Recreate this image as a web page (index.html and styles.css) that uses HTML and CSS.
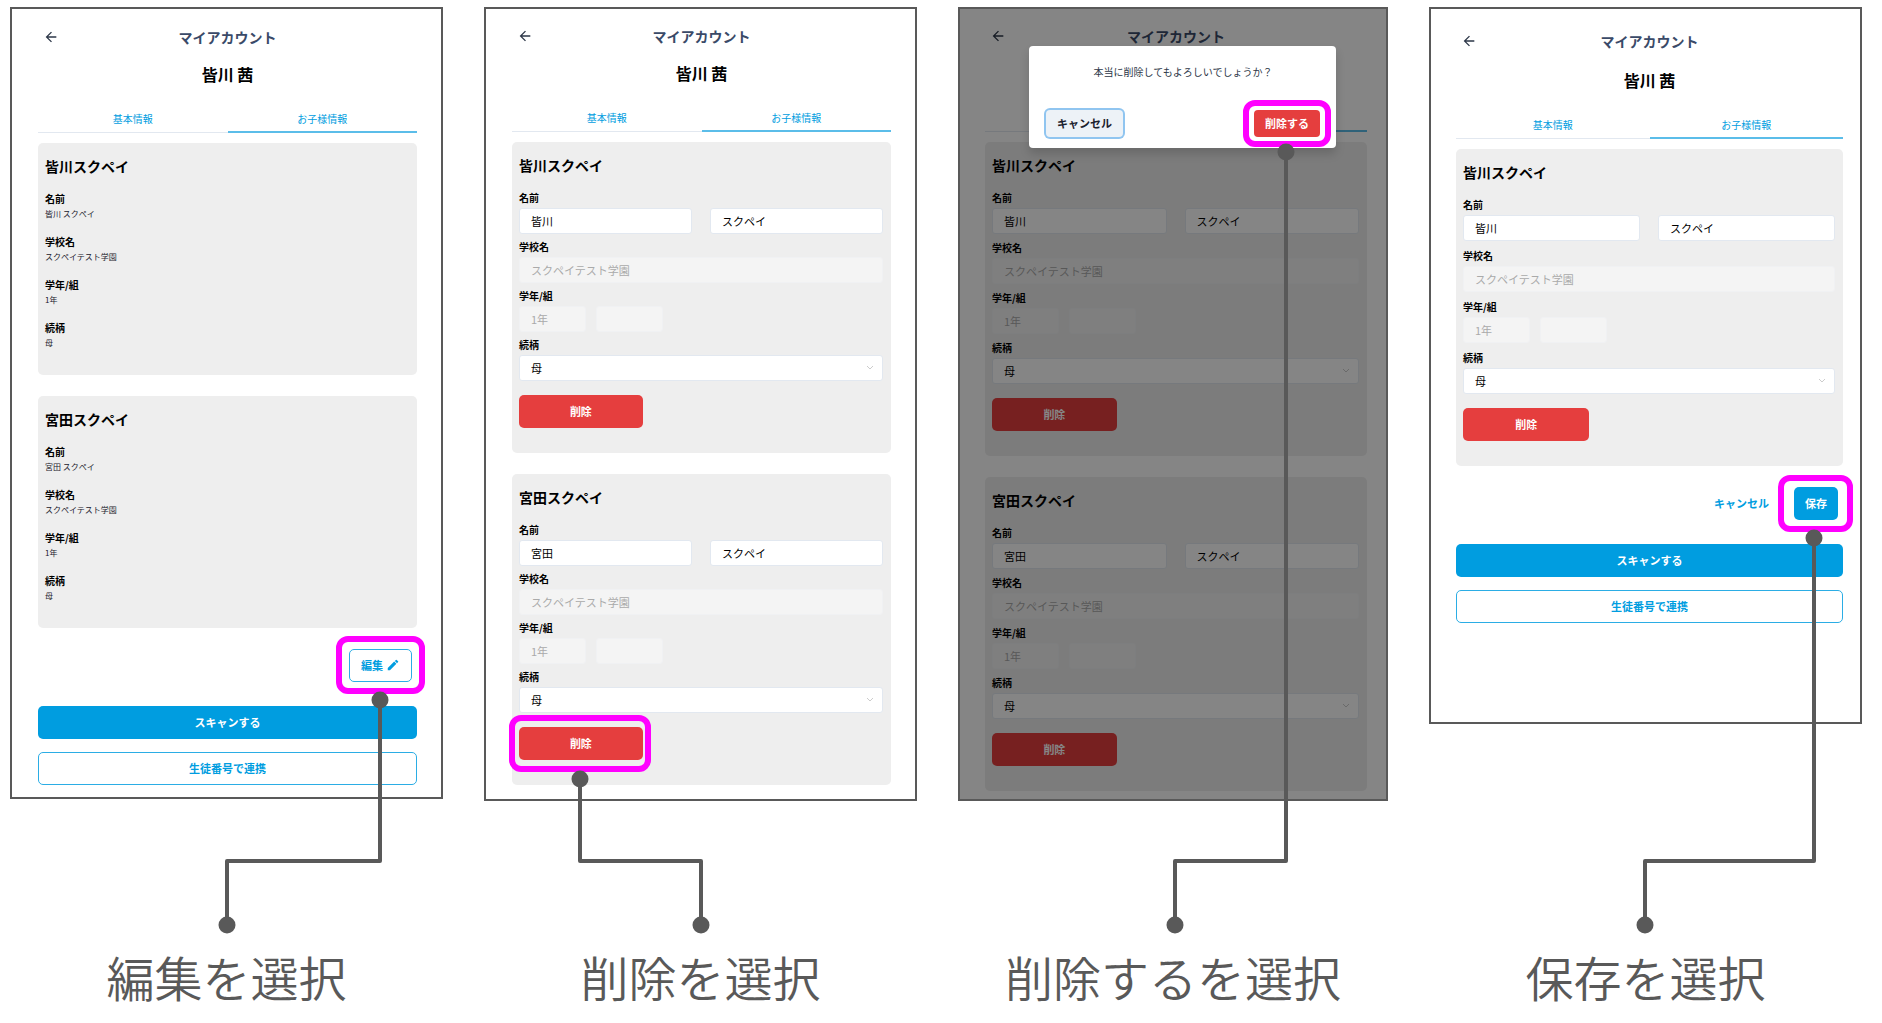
FILE: index.html
```html
<!DOCTYPE html>
<html lang="ja">
  <head>
    <meta charset="utf-8">
    <meta name="viewport" content="width=device-width, initial-scale=1">
    <title>マイアカウント</title>
    <link rel="stylesheet" href="styles.css">
  </head>

  <body>
    <main class="steps">

      <!-- step 1: edit -->
      <section class="step">
        <div class="phone phone-view">
          <header class="header">
            <button type="button" class="back" aria-label="戻る">
              <svg viewBox="0 0 24 24"><path d="M20 11H7.83l5.59-5.59L12 4l-8 8 8 8 1.41-1.41L7.83 13H20v-2z"/></svg>
            </button>
            <h1 class="title">マイアカウント</h1>
          </header>
          <p class="user">皆川 茜</p>
          <nav class="tabs">
            <a href="#" class="tab">基本情報</a>
            <a href="#" class="tab active">お子様情報</a>
          </nav>

          <div class="card">
            <h2 class="child">皆川スクペイ</h2>
            <dl class="info">
              <dt>名前</dt>
              <dd>皆川 スクペイ</dd>
              <dt>学校名</dt>
              <dd>スクペイテスト学園</dd>
              <dt>学年/組</dt>
              <dd>1年</dd>
              <dt>続柄</dt>
              <dd>母</dd>
            </dl>
          </div>

          <div class="card">
            <h2 class="child">宮田スクペイ</h2>
            <dl class="info">
              <dt>名前</dt>
              <dd>宮田 スクペイ</dd>
              <dt>学校名</dt>
              <dd>スクペイテスト学園</dd>
              <dt>学年/組</dt>
              <dd>1年</dd>
              <dt>続柄</dt>
              <dd>母</dd>
            </dl>
          </div>

          <div class="actions">
            <span class="mark mark-edit">
              <button type="button" class="btn btn-outline btn-edit">編集
                <svg viewBox="0 0 24 24"><path d="M3 17.25V21h3.75L17.81 9.94l-3.75-3.75L3 17.25zM20.71 7.04a1 1 0 000-1.41l-2.34-2.34a1 1 0 00-1.41 0l-1.83 1.83 3.75 3.75 1.83-1.83z"/></svg>
              </button>
            </span>
          </div>
          <div class="links">
            <button type="button" class="btn btn-blue">スキャンする</button>
            <button type="button" class="btn btn-outline">生徒番号で連携</button>
          </div>
        </div>
        <svg class="connector" viewBox="0 0 433 930">
          <path d="M370 693V854H217V918"/>
          <circle cx="370" cy="693" r="8.5"/>
          <circle cx="217" cy="918" r="8.5"/>
        </svg>
        <p class="caption">編集を選択</p>
      </section>

      <!-- step 2: delete -->
      <section class="step">
        <div class="phone phone-form">
          <header class="header">
            <button type="button" class="back" aria-label="戻る">
              <svg viewBox="0 0 24 24"><path d="M20 11H7.83l5.59-5.59L12 4l-8 8 8 8 1.41-1.41L7.83 13H20v-2z"/></svg>
            </button>
            <h1 class="title">マイアカウント</h1>
          </header>
          <p class="user">皆川 茜</p>
          <nav class="tabs">
            <a href="#" class="tab">基本情報</a>
            <a href="#" class="tab active">お子様情報</a>
          </nav>

          <form class="card">
            <h2 class="child">皆川スクペイ</h2>
            <div class="fields">
              <div class="field">
                <label for="b1-last">名前</label>
                <div class="row names">
                  <input type="text" id="b1-last" value="皆川">
                  <input type="text" aria-label="名" value="スクペイ">
                </div>
              </div>
              <div class="field">
                <label for="b1-school">学校名</label>
                <input type="text" id="b1-school" value="スクペイテスト学園" disabled>
              </div>
              <div class="field">
                <label for="b1-grade">学年/組</label>
                <div class="row grade">
                  <input type="text" id="b1-grade" value="1年" disabled>
                  <input type="text" aria-label="組" disabled>
                </div>
              </div>
              <div class="field">
                <label for="b1-rel">続柄</label>
                <div class="select">
                  <select id="b1-rel"><option>母</option></select>
                  <svg viewBox="0 0 8 5"><path d="M1 1l3 3 3-3"/></svg>
                </div>
              </div>
            </div>
            <button type="button" class="btn btn-red btn-delete">削除</button>
          </form>

          <form class="card">
            <h2 class="child">宮田スクペイ</h2>
            <div class="fields">
              <div class="field">
                <label for="b2-last">名前</label>
                <div class="row names">
                  <input type="text" id="b2-last" value="宮田">
                  <input type="text" aria-label="名" value="スクペイ">
                </div>
              </div>
              <div class="field">
                <label for="b2-school">学校名</label>
                <input type="text" id="b2-school" value="スクペイテスト学園" disabled>
              </div>
              <div class="field">
                <label for="b2-grade">学年/組</label>
                <div class="row grade">
                  <input type="text" id="b2-grade" value="1年" disabled>
                  <input type="text" aria-label="組" disabled>
                </div>
              </div>
              <div class="field">
                <label for="b2-rel">続柄</label>
                <div class="select">
                  <select id="b2-rel"><option>母</option></select>
                  <svg viewBox="0 0 8 5"><path d="M1 1l3 3 3-3"/></svg>
                </div>
              </div>
            </div>
            <div class="mark mark-delete btn-delete">
              <button type="button" class="btn btn-red">削除</button>
            </div>
          </form>
        </div>
        <svg class="connector" viewBox="0 0 433 930">
          <path d="M96 772V854H217V918"/>
          <circle cx="96" cy="772" r="8.5"/>
          <circle cx="217" cy="918" r="8.5"/>
        </svg>
        <p class="caption">削除を選択</p>
      </section>

      <!-- step 3: confirm dialog -->
      <section class="step">
        <div class="phone phone-dialog">
          <header class="header">
            <button type="button" class="back" aria-label="戻る">
              <svg viewBox="0 0 24 24"><path d="M20 11H7.83l5.59-5.59L12 4l-8 8 8 8 1.41-1.41L7.83 13H20v-2z"/></svg>
            </button>
            <h1 class="title">マイアカウント</h1>
          </header>
          <!-- the dialog lies over the name and the tab names -->
          <p class="user"></p>
          <nav class="tabs">
            <a href="#" class="tab" aria-label="基本情報"></a>
            <a href="#" class="tab active" aria-label="お子様情報"></a>
          </nav>

          <form class="card">
            <h2 class="child">皆川スクペイ</h2>
            <div class="fields">
              <div class="field">
                <label for="c1-last">名前</label>
                <div class="row names">
                  <input type="text" id="c1-last" value="皆川">
                  <input type="text" aria-label="名" value="スクペイ">
                </div>
              </div>
              <div class="field">
                <label for="c1-school">学校名</label>
                <input type="text" id="c1-school" value="スクペイテスト学園" disabled>
              </div>
              <div class="field">
                <label for="c1-grade">学年/組</label>
                <div class="row grade">
                  <input type="text" id="c1-grade" value="1年" disabled>
                  <input type="text" aria-label="組" disabled>
                </div>
              </div>
              <div class="field">
                <label for="c1-rel">続柄</label>
                <div class="select">
                  <select id="c1-rel"><option>母</option></select>
                  <svg viewBox="0 0 8 5"><path d="M1 1l3 3 3-3"/></svg>
                </div>
              </div>
            </div>
            <button type="button" class="btn btn-red btn-delete">削除</button>
          </form>

          <form class="card">
            <h2 class="child">宮田スクペイ</h2>
            <div class="fields">
              <div class="field">
                <label for="c2-last">名前</label>
                <div class="row names">
                  <input type="text" id="c2-last" value="宮田">
                  <input type="text" aria-label="名" value="スクペイ">
                </div>
              </div>
              <div class="field">
                <label for="c2-school">学校名</label>
                <input type="text" id="c2-school" value="スクペイテスト学園" disabled>
              </div>
              <div class="field">
                <label for="c2-grade">学年/組</label>
                <div class="row grade">
                  <input type="text" id="c2-grade" value="1年" disabled>
                  <input type="text" aria-label="組" disabled>
                </div>
              </div>
              <div class="field">
                <label for="c2-rel">続柄</label>
                <div class="select">
                  <select id="c2-rel"><option>母</option></select>
                  <svg viewBox="0 0 8 5"><path d="M1 1l3 3 3-3"/></svg>
                </div>
              </div>
            </div>
            <button type="button" class="btn btn-red btn-delete">削除</button>
          </form>

          <div class="overlay"></div>
          <div class="dialog" role="alertdialog" aria-labelledby="confirm-text">
            <p class="dialog-text" id="confirm-text">本当に削除してもよろしいでしょうか？</p>
            <div class="dialog-buttons">
              <button type="button" class="btn btn-gray">キャンセル</button>
              <span class="mark mark-confirm">
                <button type="button" class="btn btn-red">削除する</button>
              </span>
            </div>
          </div>
        </div>
        <svg class="connector" viewBox="0 0 433 930">
          <path d="M328 145V854H217V918"/>
          <circle cx="328" cy="145" r="8.5"/>
          <circle cx="217" cy="918" r="8.5"/>
        </svg>
        <p class="caption">削除するを選択</p>
      </section>

      <!-- step 4: save -->
      <section class="step">
        <div class="phone phone-save">
          <header class="header">
            <button type="button" class="back" aria-label="戻る">
              <svg viewBox="0 0 24 24"><path d="M20 11H7.83l5.59-5.59L12 4l-8 8 8 8 1.41-1.41L7.83 13H20v-2z"/></svg>
            </button>
            <h1 class="title">マイアカウント</h1>
          </header>
          <p class="user">皆川 茜</p>
          <nav class="tabs">
            <a href="#" class="tab">基本情報</a>
            <a href="#" class="tab active">お子様情報</a>
          </nav>

          <form class="card">
            <h2 class="child">皆川スクペイ</h2>
            <div class="fields">
              <div class="field">
                <label for="d1-last">名前</label>
                <div class="row names">
                  <input type="text" id="d1-last" value="皆川">
                  <input type="text" aria-label="名" value="スクペイ">
                </div>
              </div>
              <div class="field">
                <label for="d1-school">学校名</label>
                <input type="text" id="d1-school" value="スクペイテスト学園" disabled>
              </div>
              <div class="field">
                <label for="d1-grade">学年/組</label>
                <div class="row grade">
                  <input type="text" id="d1-grade" value="1年" disabled>
                  <input type="text" aria-label="組" disabled>
                </div>
              </div>
              <div class="field">
                <label for="d1-rel">続柄</label>
                <div class="select">
                  <select id="d1-rel"><option>母</option></select>
                  <svg viewBox="0 0 8 5"><path d="M1 1l3 3 3-3"/></svg>
                </div>
              </div>
            </div>
            <button type="button" class="btn btn-red btn-delete">削除</button>
          </form>

          <div class="actions">
            <button type="button" class="btn btn-text">キャンセル</button>
            <span class="mark mark-save">
              <button type="button" class="btn btn-blue">保存</button>
            </span>
          </div>
          <div class="links">
            <button type="button" class="btn btn-blue">スキャンする</button>
            <button type="button" class="btn btn-outline">生徒番号で連携</button>
          </div>
        </div>
        <svg class="connector" viewBox="0 0 433 930">
          <path d="M385 531V854H216V918"/>
          <circle cx="385" cy="531" r="8.5"/>
          <circle cx="216" cy="918" r="8.5"/>
        </svg>
        <p class="caption">保存を選択</p>
      </section>

    </main>
  </body>
</html>
```
FILE: styles.css
```css
* {
  box-sizing: border-box;
}
body {
  margin: 0;
  background: #fff;
  color: #000;
  font-family: "Noto Sans CJK JP", sans-serif;
  font-size: 10px;
}
h1, h2, p, dl, dd {
  margin: 0;
}
button, input, select {
  font-family: inherit;
  font-size: 11px;
}

.steps {
  display: grid;
  grid-template-columns: 433fr 433fr 430fr 433fr;
  column-gap: 41px;
  padding: 7px 20px 0 10px;
}
.step {
  position: relative;
  display: flex;
  flex-direction: column;
}
.caption {
  margin-top: auto;
  padding-top: 140px;
  color: #595959;
  font-size: 48px;
  font-weight: 350;
  line-height: 70px;
  text-align: center;
  white-space: nowrap;
}
.connector {
  position: absolute;
  top: 0;
  left: 0;
  width: 433px;
  height: 930px;
  fill: #595959;
  pointer-events: none;
}
.connector path {
  fill: none;
  stroke: #595959;
  stroke-width: 4;
  stroke-linejoin: round;
}

/* phone frame */
.phone {
  --head-gap: 15px;
  --field-gap: 6px;
  position: relative;
  border: 2px solid #595959;
}
.phone-view {
  padding: 19px 24px 12px 26px;
}
.phone-form {
  padding: 18px 24px 14px 26px;
}
.phone-dialog {
  --field-gap: 7px;
  padding: 18px 19px 8px 25px;
}
.phone-save {
  --head-gap: 17px;
  --field-gap: 8px;
  padding: 23px 17px 99px 25px;
}

.header {
  display: grid;
  grid-template-columns: 24px 1fr 24px;
  align-items: start;
  height: 20px;
}
.back {
  display: flex;
  padding: 1px 0 0 5px;
  border: 0;
  background: none;
}
.back svg {
  width: 16px;
  height: 16px;
  fill: #2d3748;
}
.title {
  color: #3a4a68;
  font-size: 14px;
  font-weight: 700;
  line-height: 18px;
  text-align: center;
}
.user {
  height: 24px;
  margin-top: var(--head-gap);
  font-size: 16px;
  font-weight: 700;
  line-height: 22px;
  text-align: center;
}

.tabs {
  display: flex;
  margin: 22px 0 10px;
}
.tab {
  flex: 1;
  height: 24px;
  border-bottom: 1px solid #e2e8f0;
  color: #009de0;
  font-size: 10px;
  line-height: 20px;
  text-align: center;
  text-decoration: none;
}
.tab.active {
  border-bottom: 2px solid #5bbde9;
}

/* child cards */
.card {
  padding: 14px 8px 25px 7px;
  border-radius: 5px;
  background: #eee;
}
.card + .card {
  margin-top: 21px;
}
.child {
  margin-bottom: 17px;
  font-size: 14px;
  font-weight: 700;
  line-height: 18px;
}
.info dt,
.field label {
  display: block;
  font-size: 10px;
  font-weight: 700;
  line-height: 14px;
}
.info dd {
  color: #1a202c;
  font-size: 8px;
  line-height: 15px;
}
.info dd + dt {
  margin-top: 14px;
}

.fields {
  display: flex;
  flex-direction: column;
  gap: var(--field-gap);
}
.field label {
  margin-bottom: 3px;
}
.row {
  display: flex;
}
.names {
  gap: 18px;
}
.grade {
  gap: 10px;
}
.grade input {
  width: 67px;
}
.field input,
.field select {
  display: block;
  height: 26px;
  padding: 0 11px 1px;
  border: 1px solid #e2e8f0;
  border-radius: 3px;
  background: #fff;
  color: #000;
}
.field > input,
.names input,
.field select {
  width: 100%;
  min-width: 0;
}
.field input:disabled {
  border-color: #f0f1f3;
  background: #f4f4f4;
  color: #aaa;
}
.select {
  position: relative;
}
.select select {
  appearance: none;
}
.select svg {
  position: absolute;
  top: 10px;
  right: 9px;
  width: 8px;
  height: 5px;
  fill: none;
  stroke: #ccc;
}

/* buttons */
.btn {
  height: 33px;
  padding: 0 11px 1px;
  border: 0;
  border-radius: 5px;
  font-weight: 700;
  line-height: 16px;
  white-space: nowrap;
}
.btn-blue {
  background: #009de0;
  color: #fff;
}
.btn-outline {
  border: 1px solid #2bade5;
  background: #fff;
  color: #009de0;
}
.btn-text {
  background: none;
  color: #009de0;
}
.btn-red {
  background: #e53e3e;
  color: #fff;
}
.btn-gray {
  background: #edf2f7;
  box-shadow: 0 0 0 2px #90c5f0;
  color: #1a202c;
}
.btn-edit {
  display: flex;
  align-items: center;
  gap: 3px;
}
.btn-edit svg {
  width: 14px;
  height: 14px;
  fill: #009de0;
}
.btn-delete {
  display: block;
  width: 34%;
  margin-top: 14px;
}
.btn-delete .btn {
  width: 100%;
}

.actions {
  display: flex;
  justify-content: flex-end;
  gap: 14px;
  margin: 21px 5px 24px 0;
}
.links {
  display: grid;
  gap: 13px;
}

/* magenta frame round the button to press */
.mark {
  position: relative;
  display: block;
}
.mark::after {
  content: "";
  position: absolute;
  inset: -12px;
  border: 6px solid #f0f;
  border-radius: 12px;
  pointer-events: none;
}
.mark .btn {
  vertical-align: top;
}
.mark-edit::after {
  inset: -13px -13px -12px -13px;
}
.mark-delete::after {
  inset: -12px -8px -12px -10px;
}
.mark-confirm::after {
  inset: -10px -11px;
}
.mark-save::after {
  inset: -12px -15px -12px -16px;
}

/* confirm dialog */
.overlay {
  position: absolute;
  inset: 0;
  background: rgba(0, 0, 0, 0.48);
}
.dialog {
  position: absolute;
  top: 37px;
  left: 69px;
  right: 50px;
  padding: 18px 16px 11px 17px;
  border-radius: 4px;
  background: #fff;
  box-shadow: 0 6px 10px rgba(0, 0, 0, 0.15);
}
.dialog-text {
  color: #2d3748;
  font-size: 10px;
  line-height: 16px;
  text-align: center;
}
.dialog-buttons {
  display: flex;
  justify-content: space-between;
  margin-top: 30px;
}
.dialog .btn {
  height: 27px;
  border-radius: 4px;
}
```
